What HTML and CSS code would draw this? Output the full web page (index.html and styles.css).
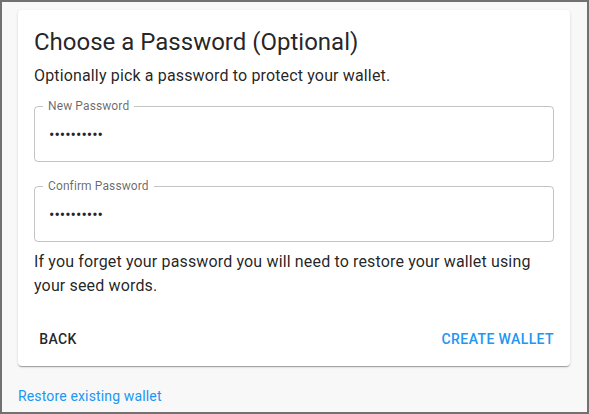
FILE: index.html
```html
<!DOCTYPE html>
<html lang="en">
<head>
<meta charset="utf-8">
<title>Choose a Password</title>
<link rel="stylesheet" href="styles.css">
</head>
<body>
  <main class="page">
    <section class="card">
      <div class="card-content">
        <h1 class="title">Choose a Password (Optional)</h1>
        <p class="subtitle">Optionally pick a password to protect your wallet.</p>
        <fieldset class="field field-first">
          <legend class="field-label">New Password</legend>
          <input class="field-input" type="password" value="abcdefghij" aria-label="New Password">
        </fieldset>
        <fieldset class="field field-second">
          <legend class="field-label">Confirm Password</legend>
          <input class="field-input" type="password" value="abcdefghij" aria-label="Confirm Password">
        </fieldset>
        <p class="note">If you forget your password you will need to restore your wallet using your seed words.</p>
      </div>
      <div class="card-actions">
        <button class="btn btn-default" type="button">Back</button>
        <button class="btn btn-primary" type="button">Create Wallet</button>
      </div>
    </section>
    <a class="restore-link" href="#">Restore existing wallet</a>
  </main>
</body>
</html>
```

FILE: styles.css
```css
* {
  box-sizing: border-box;
}

html, body {
  margin: 0;
  height: 100%;
}

body {
  font-family: Roboto, "Liberation Sans", Arial, sans-serif;
  color: rgba(0, 0, 0, 0.87);
  background: #f8f8f8;
  border: 2px solid #717171;
}

.page {
  display: flex;
  flex-direction: column;
  align-items: flex-start;
  padding: 8px 17px 0 16px;
}

.card {
  align-self: stretch;
  background: #fff;
  border-radius: 4px;
  box-shadow: 0 2px 1px -1px rgba(0, 0, 0, 0.2), 0 1px 1px 0 rgba(0, 0, 0, 0.14), 0 1px 3px 0 rgba(0, 0, 0, 0.12);
}

.card-content {
  padding: 16px 16px 15px;
}

.title {
  margin: 0 0 6px;
  font-size: 24px;
  font-weight: 400;
  line-height: 32px;
}

.subtitle,
.note {
  margin: 0;
  font-size: 16px;
  font-weight: 400;
  line-height: 24px;
  letter-spacing: 0.00938em;
}

.field {
  margin: 12px 0 0;
  padding: 0;
  min-width: 0;
  border: 1px solid rgba(0, 0, 0, 0.23);
  border-radius: 4px;
}

.field-second {
  margin-top: 18px;
}

.field-label {
  margin-left: 8px;
  padding: 0 5px;
  font-size: 12px;
  line-height: 12px;
  color: rgba(0, 0, 0, 0.6);
  letter-spacing: 0.00938em;
}

.field-input {
  display: block;
  width: 100%;
  margin: 0;
  border: 0;
  outline: 0;
  background: transparent;
  padding: 10.5px 14px 15.5px;
  font-family: Roboto, "Liberation Sans", Arial, sans-serif;
  font-size: 16px;
  line-height: 23px;
  height: 49px;
  color: rgba(0, 0, 0, 0.87);
}

.note {
  margin-top: 8px;
}

.card-actions {
  display: flex;
  justify-content: space-between;
  align-items: center;
  padding: 8px;
}

.btn {
  min-width: 64px;
  padding: 6px 8px;
  border: 0;
  background: transparent;
  border-radius: 4px;
  font-family: Roboto, "Liberation Sans", Arial, sans-serif;
  font-size: 14px;
  font-weight: 500;
  line-height: 24.5px;
  letter-spacing: 0.02857em;
  text-transform: uppercase;
  cursor: pointer;
}

.btn-default {
  color: rgba(0, 0, 0, 0.87);
}

.btn-primary {
  color: #2196f3;
}

.restore-link {
  margin-top: 20px;
  font-size: 14px;
  line-height: 20px;
  color: #2196f3;
  text-decoration: none;
  letter-spacing: 0.01071em;
}
```
